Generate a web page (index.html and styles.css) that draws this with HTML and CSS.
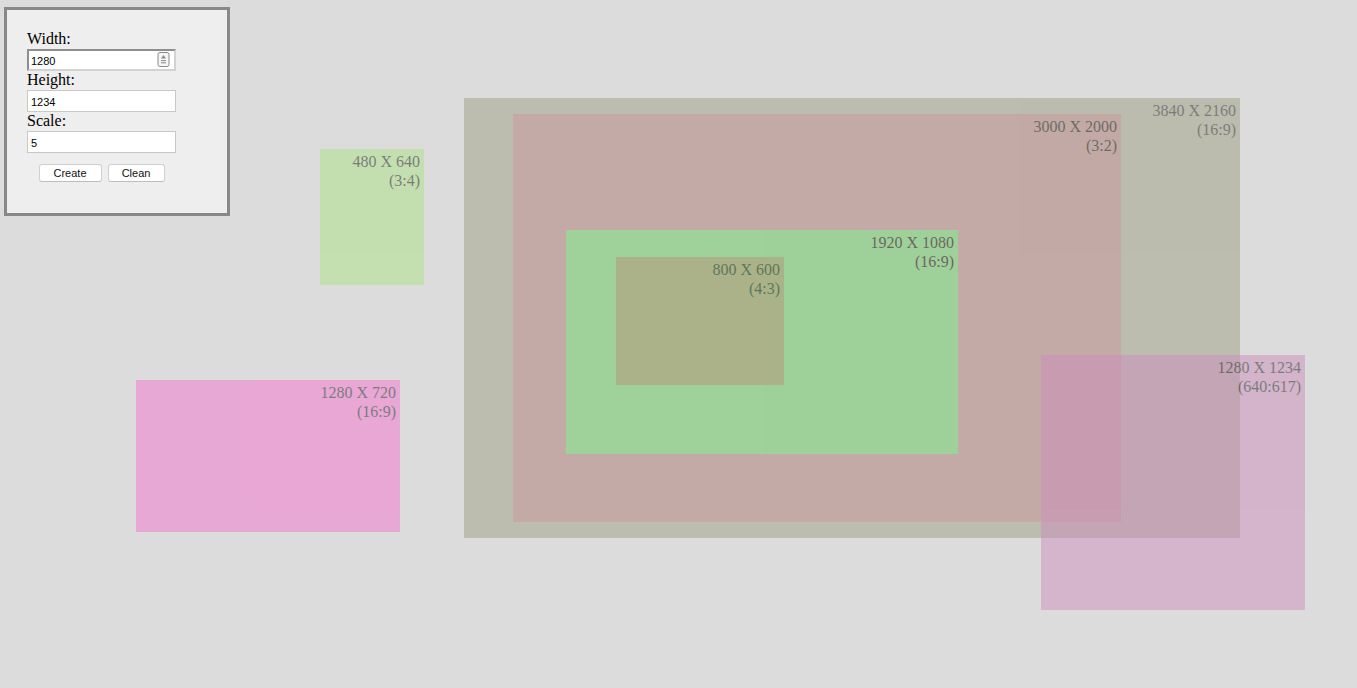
FILE: index.html
```html
<!DOCTYPE html>
<html lang="en">
<head>
  <meta charset="UTF-8">
  <title>Resolutions</title>
  <link rel="stylesheet" href="styles.css">
</head>
<body>

  <!-- ===== Painel ===== -->
  <form id="painel" class="painel">
    <label for="largura">Width:</label>
    <div class="campo campo-ativo">
      <input type="text" id="largura" value="1280">
      <svg class="spin" width="13" height="15" viewBox="0 0 13 15">
        <rect x="1" y="0.5" width="11" height="14" rx="2" fill="#f6f6f6" stroke="#8a8a8a"/>
        <path d="M6.5 3 L9 6.5 H4 Z" fill="#8a8a8a"/>
        <rect x="4" y="8" width="5" height="1.2" fill="#9a9a9a"/>
        <rect x="4" y="10.2" width="5" height="1.2" fill="#9a9a9a"/>
      </svg>
    </div>

    <label for="altura">Height:</label>
    <div class="campo">
      <input type="text" id="altura" value="1234">
    </div>

    <label for="escala">Scale:</label>
    <div class="campo">
      <input type="text" id="escala" value="5">
    </div>

    <div class="botoes">
      <button type="button" id="criar" class="botao botao-criar">Create</button>
      <button type="button" id="limpar" class="botao botao-limpar">Clean</button>
    </div>
  </form>

  <!-- ===== Area dos retangulos ===== -->
  <div id="area" class="area"></div>

  <script>
    // Cada resolucao: largura, altura, posicao na tela e cor
    const resolucoes = [
      { w: 3840, h: 2160, x: 464,  y: 98,  cor: "rgb(156,158,128)" },
      { w: 3000, h: 2000, x: 513,  y: 114, cor: "rgb(204,151,158)" },
      { w: 1920, h: 1080, x: 566,  y: 230, cor: "rgb(122,248,144)" },
      { w: 800,  h: 600,  x: 616,  y: 257, cor: "rgb(183,149,123)" },
      { w: 480,  h: 640,  x: 320,  y: 149, cor: "rgb(172,226,132)" },
      { w: 1280, h: 720,  x: 136,  y: 380, cor: "rgb(244,116,208)" },
      { w: 1280, h: 1234, x: 1041, y: 355, cor: "rgb(204,142,188)" }
    ];

    function mdc(a, b) {
      return b === 0 ? a : mdc(b, a % b);
    }

    function desenha(r, escala) {
      const d = mdc(r.w, r.h);
      const caixa = document.createElement("div");
      caixa.className = "caixa";
      caixa.style.left = r.x + "px";
      caixa.style.top = r.y + "px";
      caixa.style.width = (r.w / escala) + "px";
      caixa.style.height = (r.h / escala) + "px";
      caixa.style.backgroundColor = r.cor;
      caixa.innerHTML = r.w + " X " + r.h + "<br>(" + (r.w / d) + ":" + (r.h / d) + ")";
      document.getElementById("area").appendChild(caixa);
    }

    const escalaInicial = Number(document.getElementById("escala").value);
    resolucoes.forEach(function (r) { desenha(r, escalaInicial); });

    document.getElementById("criar").addEventListener("click", function () {
      const w = Number(document.getElementById("largura").value);
      const h = Number(document.getElementById("altura").value);
      const escala = Number(document.getElementById("escala").value) || 1;
      desenha({ w: w, h: h, x: 300, y: 300, cor: "rgb(150,180,220)" }, escala);
    });

    document.getElementById("limpar").addEventListener("click", function () {
      document.getElementById("area").innerHTML = "";
    });
  </script>
</body>
</html>
```

FILE: styles.css
```css
/* ===== Pagina ===== */
body {
  margin: 0;
  background-color: #dcdcdc;
  font-family: 'Liberation Serif', serif;
  width: 1357px;
  height: 688px;
  overflow: hidden;
}

/* ===== Painel ===== */
.painel {
  position: absolute;
  left: 4px;
  top: 7px;
  z-index: 2;
  box-sizing: border-box;
  width: 226px;
  height: 209px;
  margin: 0;
  padding: 20px 0 0 20px;
  background-color: #eeeeee;
  border: 3px solid #888888;
  display: flex;
  flex-direction: column;
  align-items: flex-start;
}

.painel label {
  font-size: 16px;
  line-height: 17px;
  padding-bottom: 2px;
  color: #000000;
}

.campo {
  position: relative;
  box-sizing: border-box;
  width: 149px;
  height: 22px;
  background-color: #ffffff;
  border: 1px solid #c8c8c8;
}

.campo-ativo {
  border: 2px solid;
  border-color: #8e8e8e #d2d2d2 #d2d2d2 #8e8e8e;
}

.campo input {
  box-sizing: border-box;
  width: 100%;
  height: 100%;
  border: none;
  outline: none;
  margin: 0;
  padding: 1px 3px 0 3px;
  background: transparent;
  font-family: 'Liberation Sans', sans-serif;
  font-size: 11px;
  color: #000000;
}

.campo-ativo input {
  padding-left: 2px;
}

.spin {
  position: absolute;
  right: 4px;
  top: 1px;
}

.botoes {
  width: 149px;
  margin-top: 11px;
  display: flex;
  justify-content: center;
  gap: 6px;
}

.botao {
  height: 18px;
  padding: 0 0 1px 0;
  background-color: #ffffff;
  border: 1px solid #d0d0d0;
  border-bottom-color: #bdbdbd;
  border-radius: 3px;
  font-family: 'Liberation Sans', sans-serif;
  font-size: 11px;
  color: #111111;
  cursor: pointer;
}

.botao-criar {
  width: 63px;
}

.botao-limpar {
  width: 57px;
}

/* ===== Retangulos ===== */
.area {
  position: relative;
  width: 100%;
  height: 100%;
}

.caixa {
  position: absolute;
  padding: 3px 4px 5px 4px;
  opacity: 0.5;
  text-align: right;
  font-size: 16px;
  line-height: 19px;
  color: #1a1a1a;
}
```
